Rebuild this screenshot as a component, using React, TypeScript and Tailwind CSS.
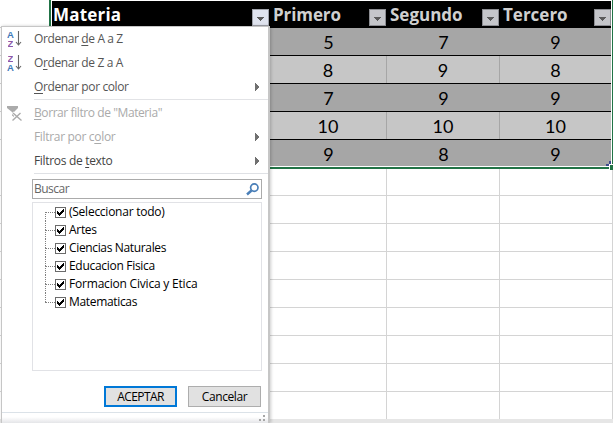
import type { ReactNode } from "react";

const columns = [
  { name: "Primero", cls: "w-[117px]", head: "pl-[3px] pr-[1px]", text: "tracking-[-0.1px]" },
  { name: "Segundo", cls: "w-[113px]", head: "pl-[3px] pr-[1px]", text: "tracking-0" },
  { name: "Tercero", cls: "w-[111px]", head: "pl-[3px] pr-0 -mr-px", text: "tracking-0" },
];

const rows = [
  [5, 7, 9],
  [8, 9, 8],
  [7, 9, 9],
  [10, 10, 10],
  [9, 8, 9],
];

const subjects = [
  { label: "(Seleccionar todo)", cls: "tracking-[-0.25px]" },
  { label: "Artes", cls: "tracking-[-0.3px]" },
  { label: "Ciencias Naturales", cls: "tracking-[-0.35px]" },
  { label: "Educacion Fisica", cls: "tracking-[-0.3px]" },
  { label: "Formacion Civica y Etica", cls: "tracking-[-0.2px]" },
  { label: "Matematicas", cls: "tracking-[-0.33px]" },
];

function FilterButton({ active = false }: { active?: boolean }) {
  return (
    <span
      className={`mt-2 flex h-[17px] w-[17px] shrink-0 items-center justify-center border ${
        active ? "border-[#a0a3ab] bg-[#dfe3ee]" : "border-[#8c8d92] bg-[#c5c6ca]"
      }`}
    >
      <svg width="7" height="4" viewBox="0 0 7 4" shapeRendering="crispEdges" className="mt-[2px]">
        <path d="M0 0h7v1H6v1H5v1H4v1H3V3H2V2H1V1H0z" fill="#5b5b5b" />
      </svg>
    </span>
  );
}

function SortIcon({ top, bottom, topColor, bottomColor }: { top: string; bottom: string; topColor: string; bottomColor: string }) {
  return (
    <span className="flex h-[18px] w-[16px] gap-[1px] font-['Liberation_Sans',sans-serif] text-[9.5px] font-bold leading-[9px]">
      <span className="flex w-[7px] flex-col items-center">
        <span className={`h-[9px] overflow-hidden ${topColor}`}>{top}</span>
        <span className={`h-[9px] overflow-hidden ${bottomColor}`}>{bottom}</span>
      </span>
      <svg width="7" height="17" viewBox="0 0 7 17" fill="none" stroke="#666" strokeWidth="1.1">
        <path d="M3.5 1v14M1 12l2.5 3L6 12" />
      </svg>
    </span>
  );
}

function ClearFilterIcon() {
  return (
    <svg width="16" height="16" viewBox="0 0 16 16" className="mt-[1px]">
      <path d="M0 0h11v2L7 6v5L5 9.500V6L0 2z" fill="#ababab" />
      <path d="M5.500 6.500l9 8M14 6.500l-8.500 8" stroke="#fff" strokeWidth="3" />
      <path d="M6 7l8.500 7.500M13.500 7L5.500 14.500" stroke="#ababab" strokeWidth="1.400" />
    </svg>
  );
}

function MenuRow({ icon, children, tone, arrow = false, text }: { icon?: ReactNode; children: ReactNode; tone: string; arrow?: boolean; text: string }) {
  return (
    <div className={`flex h-6 items-center ${tone}`}>
      <span className="flex w-8 shrink-0 justify-start pl-[5px]">{icon}</span>
      <span className={`grow whitespace-pre leading-6 ${text}`}>{children}</span>
      {arrow && (
        <svg width="4" height="8" viewBox="0 0 4 8" shapeRendering="crispEdges" className="mr-[9px]">
          <path d="M0 0h1v1h1v1h1v1h1v2H3v1H2v1H1v1H0z" fill="#707070" />
        </svg>
      )}
    </div>
  );
}

function Key({ children }: { children: ReactNode }) {
  return <span className="underline decoration-1 underline-offset-2">{children}</span>;
}

function Checkbox() {
  return (
    <svg width="11" height="11" viewBox="0 0 11 11" shapeRendering="crispEdges" className="shrink-0">
      <path d="M.5.5h10v10H.5z" fill="#fff" stroke="#6b6b6b" />
      <path d="M2 4h1v1h1v1h1V5h1V4h1V3h1V2h1v3H8v1H7v1H6v1H5v1H4V8H3V7H2z" fill="#000" />
    </svg>
  );
}

function FilterMenu() {
  return (
    <div className="absolute left-[1px] top-[26px] flex h-[397px] w-[269px] flex-col border-l border-r-2 border-t border-[#c6c6c6] bg-white font-['Open_Sans','Noto_Sans',sans-serif] text-[12px] shadow-[1px_0_3px_rgba(0,0,0,0.2)]">
      <MenuRow tone="text-[#555]" text="tracking-[-0.38px]" icon={<SortIcon top="A" bottom="Z" topColor="text-[#3f79b8]" bottomColor="text-[#8b58a8]" />}>
        Ordenar <Key>d</Key>e A a Z
      </MenuRow>
      <MenuRow tone="text-[#555]" text="tracking-[-0.38px]" icon={<SortIcon top="Z" bottom="A" topColor="text-[#8b58a8]" bottomColor="text-[#3f79b8]" />}>
        O<Key>r</Key>denar de Z a A
      </MenuRow>
      <MenuRow tone="text-[#555]" text="tracking-[-0.38px]" arrow>
        <Key>O</Key>rdenar por color
      </MenuRow>
      <div className="ml-8 h-px bg-[#e2e3e6]" />
      <div className="h-px" />
      <MenuRow tone="text-[#aaa]" text="tracking-[-0.42px]" icon={<ClearFilterIcon />}>
        <Key>B</Key>orrar filtro de "Materia"
      </MenuRow>
      <MenuRow tone="text-[#aaa]" text="tracking-[-0.32px]" arrow>
        Filtrar por c<Key>o</Key>lor
      </MenuRow>
      <MenuRow tone="text-[#444]" text="tracking-[-0.32px]" arrow>
        Filtros de <Key>t</Key>exto
      </MenuRow>
      <div className="ml-8 h-px bg-[#dfe1e5]" />
      <div className="ml-[30px] mt-[5px] flex h-5 w-[230px] items-center justify-between border border-[#ababab] pl-[1px] pr-[2px] text-[#666]">
        <span className="leading-[18px] tracking-[-0.5px]">Buscar</span>
        <svg width="13" height="13" viewBox="0 0 13 13" fill="none" stroke="#4a7fb8">
          <circle cx="8.300" cy="4.600" r="3.700" strokeWidth="1.700" />
          <path d="M5.500 7.500L1 11.500" strokeWidth="2.400" />
        </svg>
      </div>
      <div className="ml-[30px] mt-[3px] h-[169px] w-[230px] border border-[#e1e2e6] pl-3">
        <ul className="flex flex-col text-black">
          {subjects.map((s, i) => (
            <li key={s.label} className="flex h-[18px]">
              <span className="flex w-[10px] flex-col">
                <span className={`h-[9px] ${i > 0 ? "border-l border-dotted border-[#808080]" : ""}`} />
                <span className={`h-[9px] border-t border-dotted border-[#808080] ${i < 5 ? "border-l" : ""}`} />
              </span>
              <span className="flex items-center">
                <Checkbox />
                <span className={`ml-[3px] whitespace-pre leading-[18px] ${s.cls}`}>{s.label}</span>
              </span>
            </li>
          ))}
        </ul>
      </div>
      <div className="ml-[102px] mt-[15px] flex gap-[11px] text-black">
        <button className="h-[21px] w-[73px] border-2 border-[#0078d7] bg-[#e1e1e1] text-[12px] leading-[17px] tracking-[-0.6px]">ACEPTAR</button>
        <button className="h-[21px] w-[73px] border border-[#adadad] bg-[#e1e1e1] text-[12px] leading-[18px] tracking-[-0.4px]">Cancelar</button>
      </div>
      <div className="mt-[5px] flex grow items-start justify-end border-t border-[#dbe2e8] bg-linear-to-b from-white from-40% to-[#e4e5e8] pr-[3px]">
        <svg width="6" height="6" viewBox="0 0 6 6" fill="#a6a6a6" shapeRendering="crispEdges" className="mt-[2px]">
          <path d="M4 0h2v2H4zM4 4h2v2H4zM0 4h2v2H0z" />
        </svg>
      </div>
    </div>
  );
}

export default function App() {
  return (
    <main className="relative flex h-[423px] w-[613px] flex-col overflow-hidden bg-white font-[Lato,sans-serif] text-[18px]">
      <section className="flex h-[169px]">
        <div className="flex w-[49px] flex-col pt-[27px]">
          {rows.map((_, i) => (
            <div key={i} className="h-7 shrink-0 border-t border-[#cfcfcf]" />
          ))}
        </div>
        <div className="flex w-[564px] border-b-2 border-l-2 border-r border-[#217346] pb-[1px] pl-[1px] pr-[1px]">
          <div className="flex w-full flex-col overflow-hidden pt-[1px]">
            <div className="flex h-[27px] shrink-0 bg-black font-['Open_Sans',sans-serif] text-[17px] font-bold text-[#d0d0d0]">
              <div className="flex w-[218px] shrink-0 justify-between pl-[1px] pr-[1px] text-white">
                <span className="leading-[27px] tracking-[0.2px]">Materia</span>
                <FilterButton active />
              </div>
              {columns.map((c) => (
                <div key={c.name} className={`flex shrink-0 justify-between ${c.cls} ${c.head}`}>
                  <span className={`leading-[27px] ${c.text}`}>{c.name}</span>
                  <FilterButton />
                </div>
              ))}
            </div>
            {rows.map((r, i) => (
              <div
                key={i}
                className={`flex shrink-0 ${i < 4 ? "h-7 border-b border-black" : "h-[26px]"} ${i % 2 ? "bg-[#c6c6c6]" : "bg-[#a6a6a6]"}`}
              >
                <div className="w-[218px] shrink-0" />
                {r.map((n, j) => (
                  <div
                    key={j}
                    className={`h-[27px] shrink-0 text-center leading-[28px] text-black ${columns[j].cls} ${i % 2 && j < 2 ? "border-r border-[#a6a6a6]" : ""}`}
                  >
                    {n}
                  </div>
                ))}
              </div>
            ))}
          </div>
        </div>
      </section>
      <section className="flex h-[250px] flex-col">
        {Array.from({ length: 9 }, (_, i) => (
          <div
            key={i}
            className={`flex shrink-0 border-b ${i === 0 ? "h-[27px]" : "h-7"} ${i === 8 ? "border-[#9b9b9b]" : "border-[#d4d4d4]"}`}
          >
            <div className="w-[387px] border-r border-[#d4d4d4]" />
            <div className="w-[113px] border-r border-[#d4d4d4]" />
            <div className="w-[113px] border-r border-[#d4d4d4]" />
          </div>
        ))}
      </section>
      <footer className="grow bg-[#e6e6e6]" />
      <span className="absolute left-[609px] top-[164px] h-[6px] w-[6px] border-l border-t border-white bg-[#217346]" />
      <svg className="absolute left-[606px] top-[161px]" width="5" height="5" viewBox="0 0 5 5" shapeRendering="crispEdges">
        <path d="M3 0h2v3H3v2H0V3h3z" fill="#3f4a8c" />
      </svg>
      <FilterMenu />
    </main>
  );
}
